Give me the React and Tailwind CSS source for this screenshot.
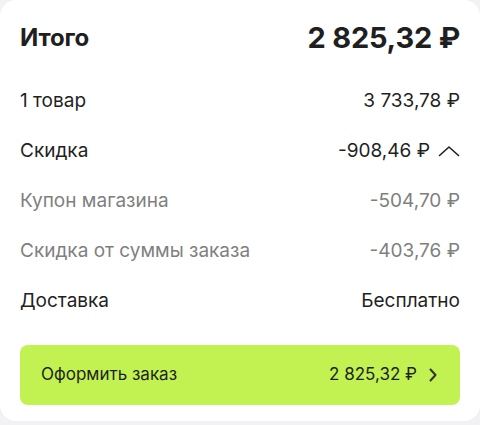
import React from "react";

function ChevronUp() {
  return (
    <svg width="22" height="12" viewBox="0 0 22 12" fill="none" className="shrink-0">
      <path d="M1.5 10.5 L11 2 L20.5 10.5" stroke="#1f1f1f" strokeWidth="1.6" strokeLinecap="round" strokeLinejoin="round" />
    </svg>
  );
}

function ChevronRight() {
  return (
    <svg width="10" height="16" viewBox="0 0 10 16" fill="none" className="shrink-0">
      <path d="M2.5 2.5 L7.5 8 L2.5 13.5" stroke="#333333" strokeWidth="2" strokeLinecap="round" strokeLinejoin="round" />
    </svg>
  );
}

function Row({ label, value, muted, children }) {
  return (
    <div className={`flex items-center justify-between h-[26px] text-[19px] leading-[26px] ${muted ? "text-[#7f7f7f]" : "text-[#1f1f1f]"}`}>
      <span>{label}</span>
      <span className="flex items-center gap-[8px]">
        <span>{value}</span>
        {children}
      </span>
    </div>
  );
}

export default function App() {
  return (
    <div className="w-[480px] h-[425px] bg-[#f2f2f4]" style={{ fontFamily: "Inter, 'Noto Sans', sans-serif" }}>
      <div className="bg-white rounded-[16px] h-[421px] px-[20px] pt-[20px] flex flex-col">
        <div className="flex items-center justify-between h-[36px]">
          <span className="text-[24px] font-bold text-[#1f1f1f] tracking-[-0.2px]">Итого</span>
          <span className="text-[29px] font-bold text-[#1f1f1f] tracking-[-0.2px]">2 825,32 ₽</span>
        </div>
        <div className="mt-[32px] flex flex-col gap-[24px]">
          <Row label="1 товар" value="3 733,78 ₽" />
          <Row label="Скидка" value="-908,46 ₽">
            <ChevronUp />
          </Row>
          <Row label="Купон магазина" value="-504,70 ₽" muted />
          <Row label="Скидка от суммы заказа" value="-403,76 ₽" muted />
          <Row label="Доставка" value="Бесплатно" />
        </div>
        <button className="mt-[31px] h-[60px] w-full rounded-[8px] bg-[#c1f251] flex items-center justify-between pl-[21px] pr-[22px] text-[17px] text-[#1f1f1f]">
          <span>Оформить заказ</span>
          <span className="flex items-center gap-[11px]">
            <span>2 825,32 ₽</span>
            <ChevronRight />
          </span>
        </button>
      </div>
    </div>
  );
}
